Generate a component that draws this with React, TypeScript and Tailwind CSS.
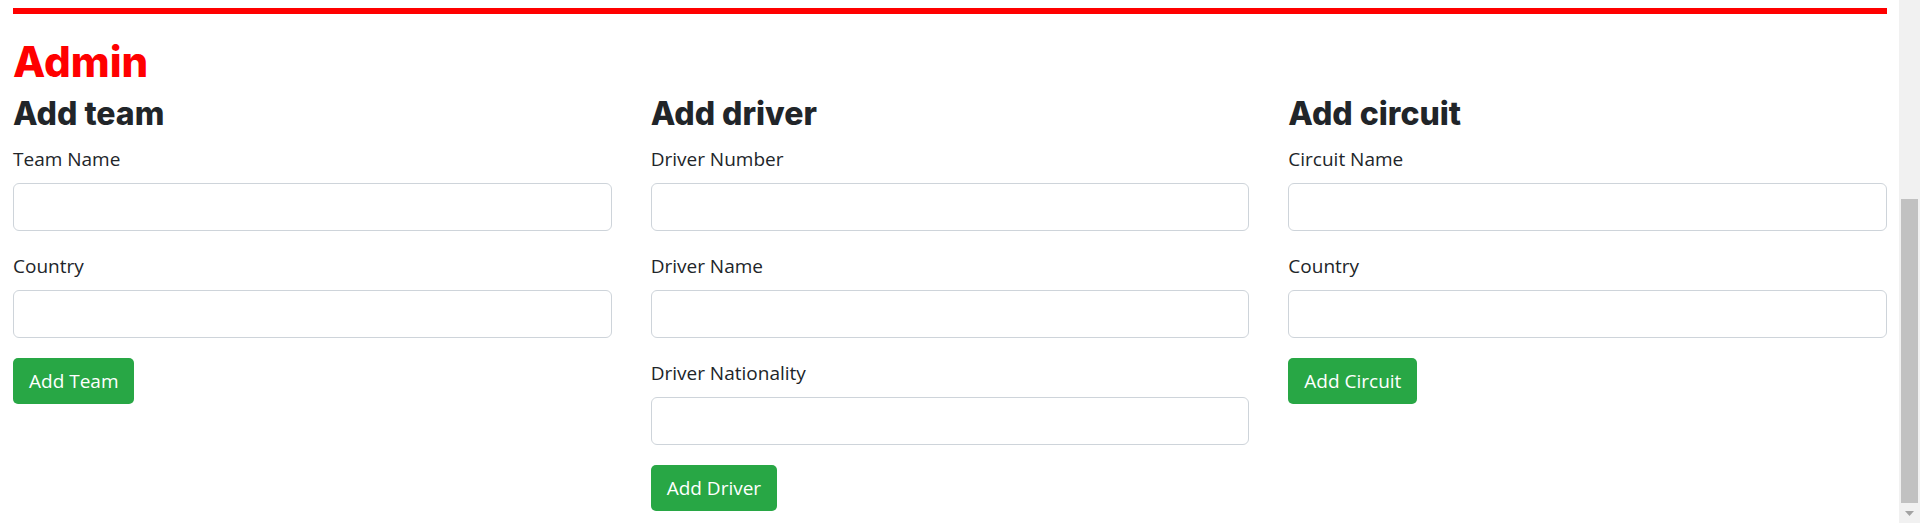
const headingFont = { fontFamily: "Inter, 'Noto Sans', sans-serif" };

interface FieldProps {
  label: string;
}

function Field({ label }: FieldProps) {
  return (
    <div className="mb-[20px]">
      <label className="block h-[30px] leading-[30px] text-[19px] text-[#212529] mb-[9px]">
        {label}
      </label>
      <input
        type="text"
        className="block w-full h-[48px] rounded-[6px] border border-[#ced4da] bg-white px-[15px] outline-none"
      />
    </div>
  );
}

interface FormColumnProps {
  title: string;
  fields: string[];
  button: string;
}

function FormColumn({ title, fields, button }: FormColumnProps) {
  return (
    <div>
      <h3
        className="text-[32px] leading-[32px] font-extrabold text-[#212529] mb-[14px]"
        style={headingFont}
      >
        {title}
      </h3>
      {fields.map((f) => (
        <Field key={f} label={f} />
      ))}
      <button className="h-[46px] px-[16px] rounded-[5px] bg-[#28a745] text-white text-[19px] leading-none">
        {button}
      </button>
    </div>
  );
}

export default function App() {
  return (
    <div
      className="flex h-[523px] w-full overflow-hidden bg-white"
      style={{ fontFamily: "'Open Sans', 'Noto Sans', sans-serif" }}
    >
      <div className="flex-1 pl-[13px] pr-[12px] pt-[8px]">
        <div className="h-[6px] bg-[#ff0000]" />
        <h1
          className="mt-[27px] text-[42px] leading-[42px] font-extrabold text-[#ff0000]"
          style={headingFont}
        >
          Admin
        </h1>
        <div className="mt-[15px] grid grid-cols-3 gap-x-[39px]">
          <FormColumn title="Add team" fields={["Team Name", "Country"]} button="Add Team" />
          <FormColumn
            title="Add driver"
            fields={["Driver Number", "Driver Name", "Driver Nationality"]}
            button="Add Driver"
          />
          <FormColumn title="Add circuit" fields={["Circuit Name", "Country"]} button="Add Circuit" />
        </div>
      </div>
      {/* scrollbar */}
      <div className="w-[21px] bg-[#f1f1f1] flex flex-col items-center">
        <div className="h-[199px]" />
        <div className="w-[17px] h-[304px] bg-[#c1c1c1]" />
        <div className="flex-1 flex items-center justify-center">
          <svg width="9" height="5" viewBox="0 0 9 5">
            <path d="M0 0 H9 L4.5 5 Z" fill="#a3a3a3" />
          </svg>
        </div>
      </div>
    </div>
  );
}
